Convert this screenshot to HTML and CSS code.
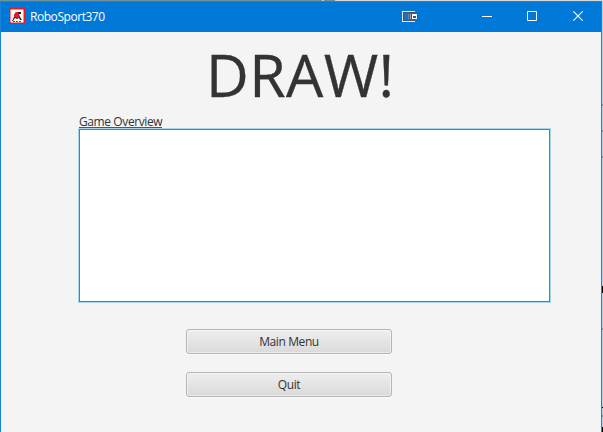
FILE: index.html
```html
<!DOCTYPE html>
<html lang="en">
<head>
<meta charset="utf-8">
<title>RoboSport370</title>
<link rel="stylesheet" href="styles.css">
</head>
<body>
<div class="backdrop"></div>
<div class="window">
  <header class="titlebar">
    <svg class="app-icon" width="16" height="16" viewBox="0 0 16 16">
      <rect width="16" height="16" fill="#f01820"/>
      <rect x="1.5" y="1.5" width="13" height="13" fill="#fff"/>
      <path d="M7 4H12V6H10L11 9L13 12H11L10 10L8 11L6 10L4 13H3L5 9V7Z" fill="#222"/>
      <path d="M5 7L7 4H9L10 8L11 9L9 10L5 9Z" fill="#f01820"/>
      <path d="M4 13.5H13" fill="none" stroke="#555" stroke-dasharray="2 1"/>
    </svg>
    <span class="app-name">RoboSport370</span>
    <svg class="wallet" width="16" height="12" viewBox="0 0 16 12">
      <path d="M0 0H13V3H16V8H13V11H0Z" fill="#e8e8ea"/>
      <path d="M1 1H13V10H1Z" fill="#4d5068"/>
      <path d="M2 2H12V9H2Z" fill="#1473c5"/>
      <path d="M6 3H7V8H6Z" fill="#5489ba"/>
      <path d="M8 3H9V8H8Z" fill="#9aa6b8"/>
      <path d="M9 2H16V8H9Z" fill="#4d5068"/>
      <path d="M10 3H15V8H10Z" fill="#fff"/>
      <path d="M11 5H14V7H11Z" fill="#4d5068"/>
    </svg>
    <div class="controls">
      <svg width="10" height="10" viewBox="0 0 10 10"><path d="M0 5.5H10" stroke="#fff"/></svg>
      <svg width="10" height="10" viewBox="0 0 10 10"><path d="M.5 .5H9.5V9.5H.5Z" fill="none" stroke="#fff"/></svg>
      <svg class="close" width="10" height="10" viewBox="0 0 10 10"><path d="M.3 .3L9.7 9.7M9.7 .3L.3 9.7" stroke="#fff" stroke-width="1.1"/></svg>
    </div>
  </header>
  <main class="content">
    <h1 class="result">DRAW!</h1>
    <div class="overview-label"><span>Game Overview</span></div>
    <div class="overview"></div>
    <div class="actions">
      <button class="btn" type="button">Main Menu</button>
      <button class="btn" type="button">Quit</button>
    </div>
  </main>
</div>
<svg class="edge" width="1" height="432" viewBox="0 0 1 432">
  <rect width="1" height="432" fill="#b4d2ee"/>
  <path d="M0 104h1v2H0zM0 130h1v2H0zM0 156h1v2H0zM0 328h1v2H0zM0 415h1v2H0z" fill="#6897c4"/>
  <path d="M0 286h1v7H0zM0 407h1v1H0zM0 427h1v5H0z" fill="#000"/>
</svg>
</body>
</html>
```
FILE: styles.css
```css
* { box-sizing: border-box; }

body {
  margin: 0;
  height: 432px;
  overflow: hidden;
  display: grid;
  grid-template-columns: 602px 1px;
  grid-template-rows: 1px 431px;
  font: 12px/16px "Open Sans", "Noto Sans", sans-serif;
  letter-spacing: -0.4px;
  color: #333;
  background: #d5d9dc;
}

.backdrop {
  background: linear-gradient(90deg, #71929b 322px, #c8d0d4 322px 324px, #71929b 324px 335px, #d5d9dc 335px);
}

.edge { grid-column: 2; grid-row: 1 / 3; }

.window {
  grid-column: 1;
  grid-row: 2;
  border: solid #1883d7;
  border-width: 1px 1px 0;
  background: #f4f4f4;
}

.titlebar {
  display: flex;
  height: 30px;
  padding-left: 8px;
  background: #0078d7;
  color: #fff;
}

.app-icon { margin-top: 6px; }

.app-name {
  width: 100px;
  margin: 7px 0 0 5px;
  letter-spacing: -0.45px;
}

.wallet { margin: 9px 0 0 272px; }

.controls {
  display: flex;
  gap: 35px;
  margin: 9px 0 0 64px;
}

.close { margin-left: 1px; }

.content { padding: 0 51px 0 78px; }

.result {
  margin: 3px 0 0 -2px;
  height: 78px;
  padding-left: 129px;
  font-size: 59px;
  line-height: 79px;
  font-weight: 400;
  letter-spacing: 0.4px;
  -webkit-text-stroke: 0.3px #333;
  white-space: nowrap;
}

.overview-label {
  height: 16px;
  line-height: 18px;
}

.overview-label span {
  display: block;
  width: 83px;
  height: 15px;
  border-bottom: 1px solid #555;
  white-space: nowrap;
}

.overview {
  width: 471px;
  height: 173px;
  border: 1px solid #0f9bcb;
  box-shadow: 0 0 0 1px #a3d7eb;
  background: #fff;
}

.actions {
  display: flex;
  flex-direction: column;
  gap: 18px;
  width: 206px;
  margin: 27px 0 0 107px;
}

.btn {
  height: 25px;
  padding: 0;
  border: 1px solid #b5b5b5;
  border-radius: 3px;
  background: linear-gradient(#eee, #dadada);
  box-shadow: inset 0 0 0 1px rgba(255, 255, 255, .45), 0 1px 0 #fafafa;
  font: inherit;
  letter-spacing: inherit;
  color: #333;
}
```
